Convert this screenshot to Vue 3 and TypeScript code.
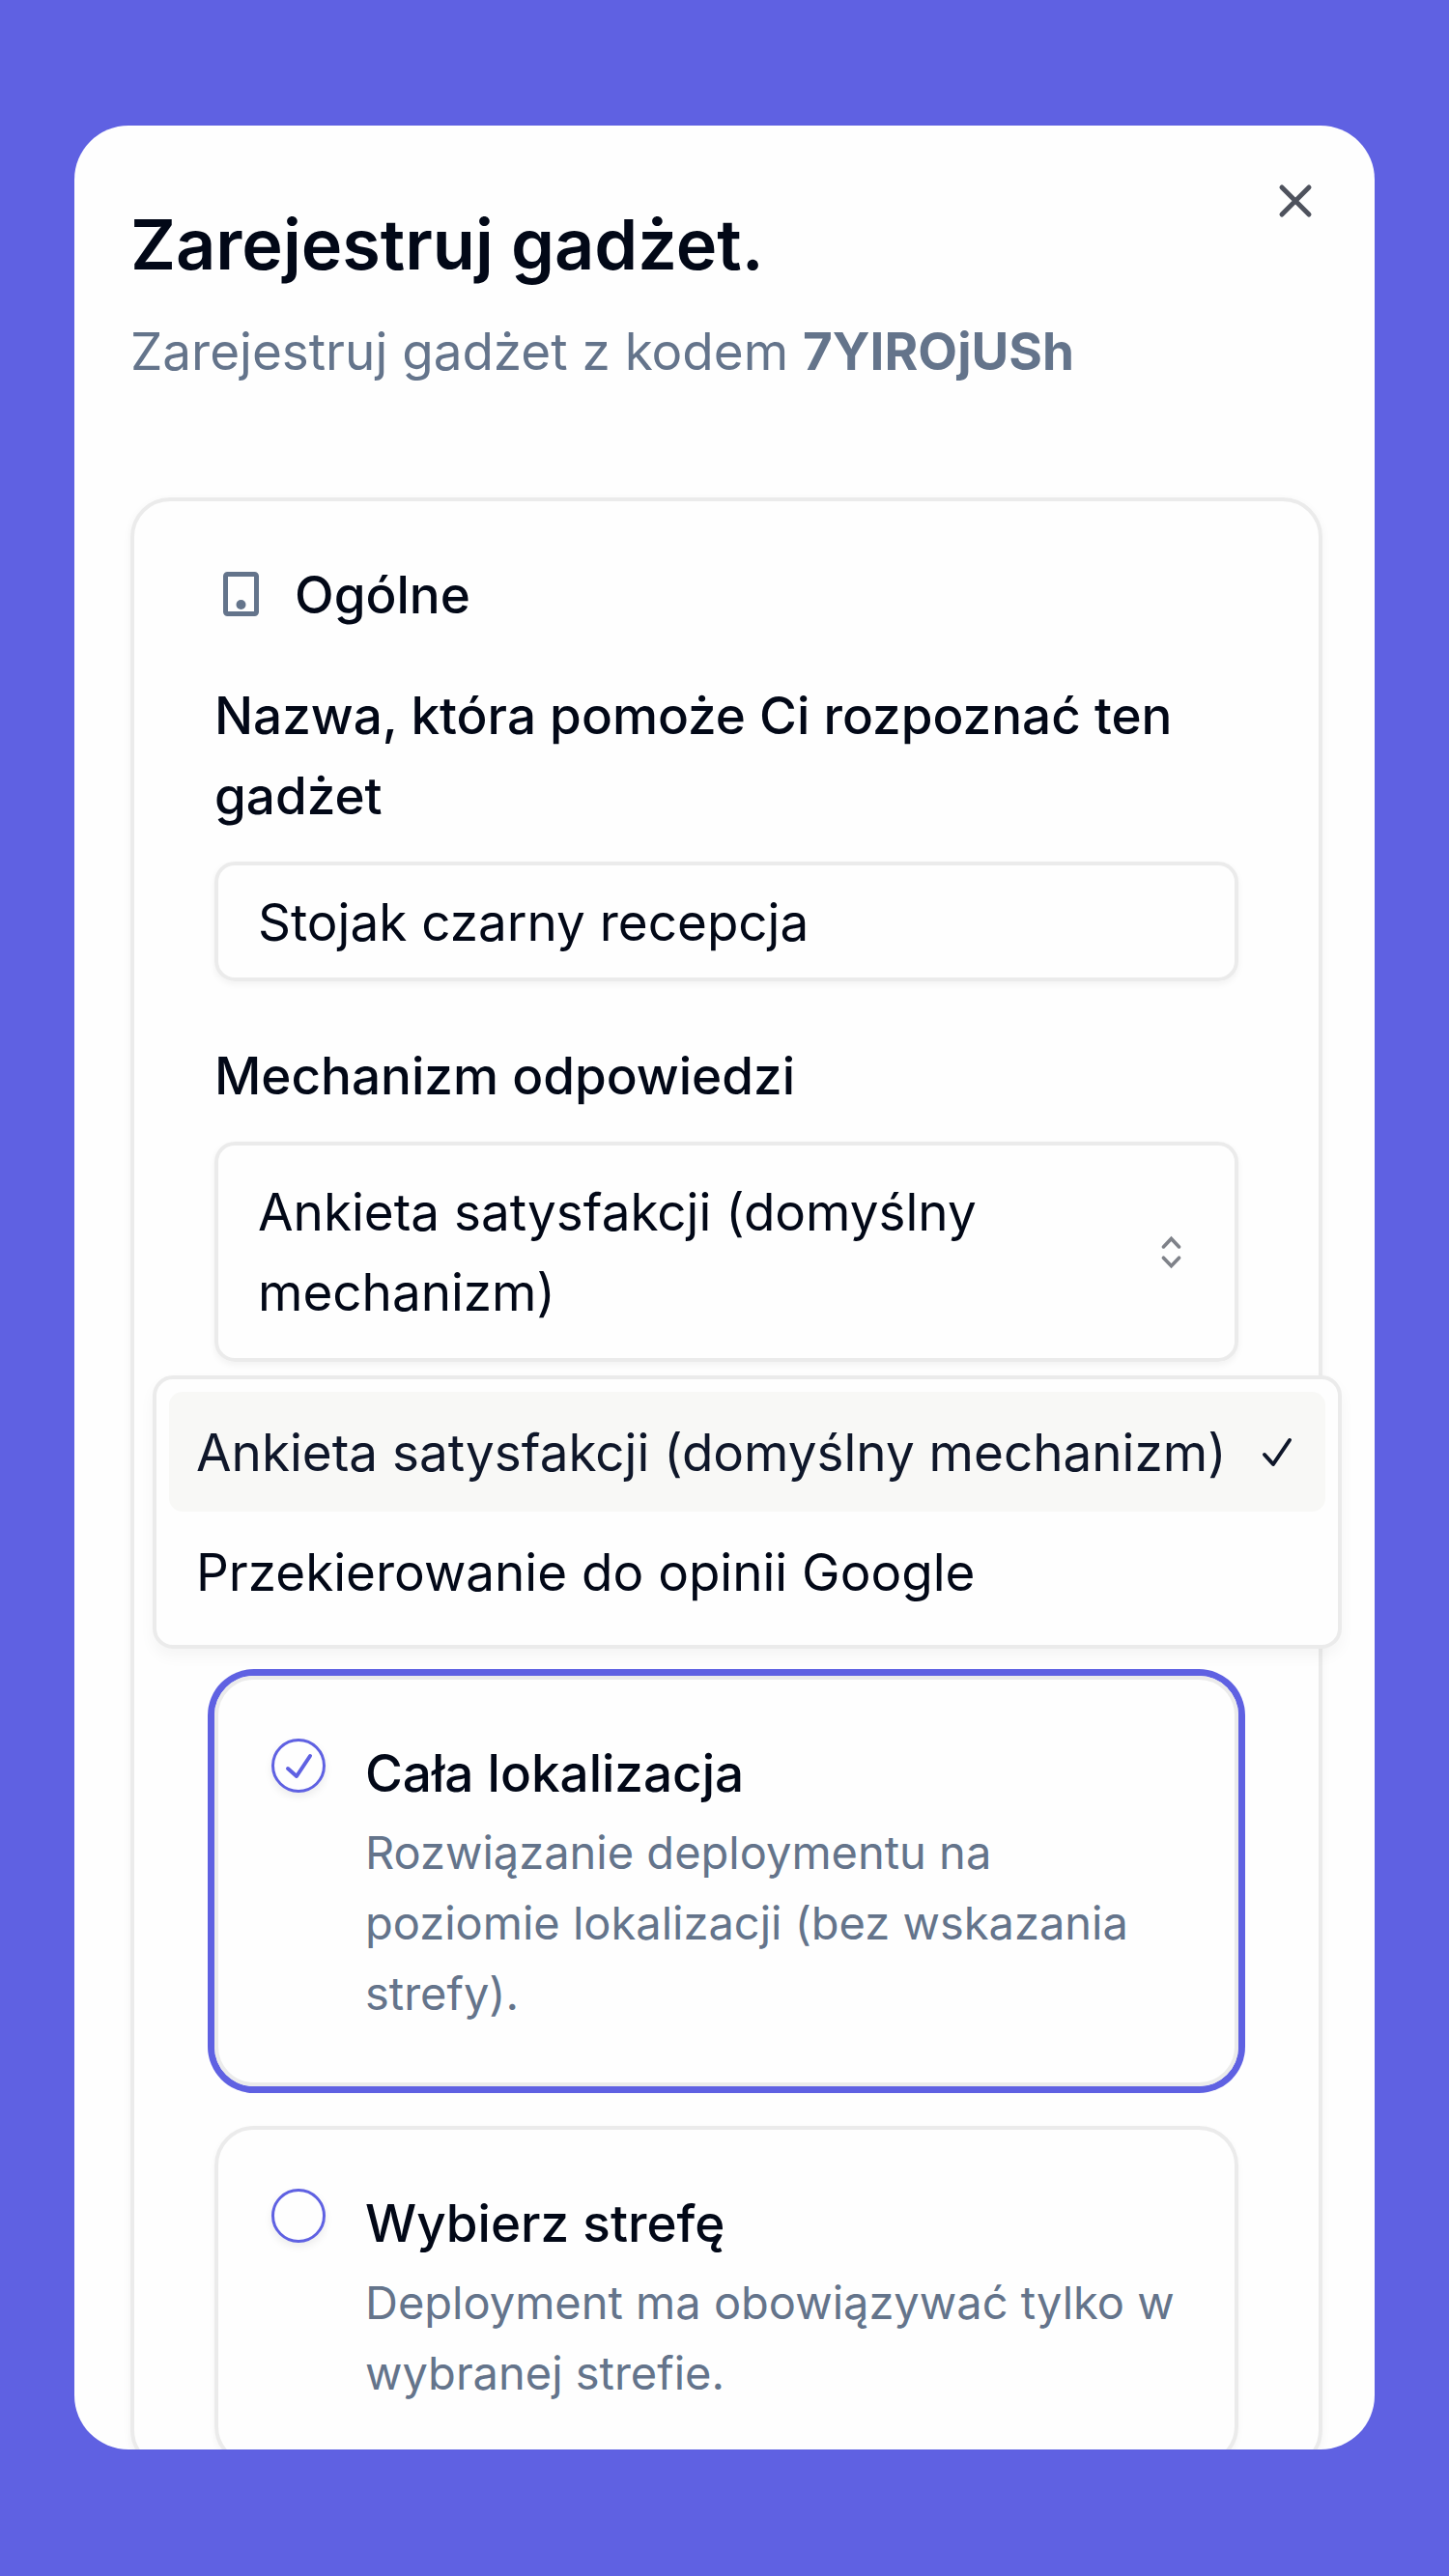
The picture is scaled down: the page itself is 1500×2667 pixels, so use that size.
<script setup lang="ts">
import { ref } from 'vue'

interface Choice {
  value: string
  label: string
}

interface Scope extends Choice {
  description: string
}

const code = '7YIROjUSh'
const gadgetName = ref('Stojak czarny recepcja')

const mechanisms: Choice[] = [
  { value: 'survey', label: 'Ankieta satysfakcji (domyślny mechanizm)' },
  { value: 'google', label: 'Przekierowanie do opinii Google' },
]
const mechanism = ref<Choice>(mechanisms[0])
const listOpen = ref(true)

const scopes: Scope[] = [
  {
    value: 'location',
    label: 'Cała lokalizacja',
    description: 'Rozwiązanie deploymentu na poziomie lokalizacji (bez wskazania strefy).',
  },
  {
    value: 'zone',
    label: 'Wybierz strefę',
    description: 'Deployment ma obowiązywać tylko w wybranej strefie.',
  },
]
const scope = ref('location')

function pick(option: Choice) {
  mechanism.value = option
  listOpen.value = false
}
</script>

<template>
  <main class="page">
    <section class="dialog" role="dialog" aria-labelledby="dialog-title">
      <button class="close" type="button" aria-label="Zamknij">
        <svg viewBox="0 0 52 52" fill="none" stroke="currentColor" stroke-width="5" stroke-linecap="round" aria-hidden="true">
          <path d="M12 12 40 40M40 12 12 40" />
        </svg>
      </button>

      <header class="head">
        <h1 id="dialog-title">Zarejestruj gadżet.</h1>
        <p>Zarejestruj gadżet z kodem <strong>{{ code }}</strong></p>
      </header>

      <form class="panel" @submit.prevent>
        <h2 class="panel-title">
          <svg viewBox="0 0 55 55" fill="none" aria-hidden="true">
            <rect x="11.500" y="5.500" width="32" height="41" rx="2" stroke="currentColor" stroke-width="5" />
            <circle cx="27.500" cy="37" r="5" fill="currentColor" />
          </svg>
          <span>Ogólne</span>
        </h2>

        <div class="field">
          <label for="gadget-name">Nazwa, która pomoże Ci rozpoznać ten gadżet</label>
          <input id="gadget-name" v-model="gadgetName" class="control text" type="text" />
        </div>

        <div class="field">
          <label for="mechanism">Mechanizm odpowiedzi</label>
          <div class="picker">
            <button
              id="mechanism"
              class="control trigger"
              type="button"
              role="combobox"
              aria-haspopup="listbox"
              aria-controls="mechanism-list"
              :aria-expanded="listOpen"
              @click="listOpen = !listOpen"
            >
              <span>{{ mechanism.label }}</span>
              <svg viewBox="0 0 15 15" fill="none" stroke="currentColor" stroke-linecap="round" aria-hidden="true">
                <path d="M5.3 5.7 7.5 3.4l2.2 2.3M5.3 8.800l2.2 2.3 2.2-2.3" />
              </svg>
            </button>

            <ul v-if="listOpen" id="mechanism-list" class="list" role="listbox">
              <li
                v-for="option in mechanisms"
                :key="option.value"
                role="option"
                :class="{ active: option.value === mechanism.value }"
                :aria-selected="option.value === mechanism.value"
                @click="pick(option)"
              >
                <span>{{ option.label }}</span>
                <svg
                  v-if="option.value === mechanism.value"
                  viewBox="0 0 32 32"
                  fill="none"
                  stroke="currentColor"
                  stroke-width="4"
                  stroke-linecap="round"
                  stroke-linejoin="round"
                  aria-hidden="true"
                >
                  <path d="M3 18 12 28 29 3" />
                </svg>
              </li>
            </ul>
          </div>
        </div>

        <fieldset class="scopes" aria-label="Zakres">
          <label v-for="item in scopes" :key="item.value" class="scope" :class="{ selected: item.value === scope }">
            <span class="radio">
              <input v-model="scope" type="radio" name="scope" :value="item.value" />
              <svg
                v-if="item.value === scope"
                viewBox="0 0 56 56"
                fill="none"
                stroke="currentColor"
                stroke-width="4"
                stroke-linecap="round"
                stroke-linejoin="round"
                aria-hidden="true"
              >
                <path d="M17 31 26 39 40 18" />
              </svg>
            </span>
            <span class="scope-text">
              <span class="scope-title">{{ item.label }}</span>
              <span class="scope-description">{{ item.description }}</span>
            </span>
          </label>
        </fieldset>
      </form>
    </section>
  </main>
</template>

<style>
body {
  margin: 0;
  background: #5f61e2;
}
</style>

<style scoped>
* {
  box-sizing: border-box;
}

.page {
  --ink: #020817;
  --muted: #64748b;
  --accent: #5f61e2;
  --line: #ebebeb;
  display: flex;
  height: 100vh;
  padding: 130px 77px 131px;
  background: var(--accent);
  color: var(--ink);
  font-family: Inter, 'Liberation Sans', sans-serif;
  font-size: 53px;
  line-height: 83px;
}

.dialog {
  position: relative;
  flex: 1;
  min-width: 0;
  padding: 82px 54px 0 58px;
  overflow: hidden;
  border-radius: 56px;
  background: #fefefe;
}

.close {
  position: absolute;
  top: 52px;
  right: 56px;
  display: flex;
  padding: 0;
  border: 0;
  background: none;
  color: #4e525d;
  cursor: pointer;
}

.close svg {
  width: 52px;
  height: 52px;
}

h1,
h2,
p {
  margin: 0;
}

.head h1 {
  font-size: 72px;
  font-weight: 600;
  line-height: 82px;
}

.head p {
  margin-top: 29px;
  color: var(--muted);
}

.head strong {
  font-weight: 700;
}

.panel {
  margin-top: 109px;
  padding: 56px 83px 0;
  border: 4px solid var(--line);
  border-radius: 41px;
  box-shadow: 0 3px 10px rgba(0, 0, 0, 0.05);
}

.panel-title {
  display: flex;
  align-items: center;
  gap: 28px;
  font-size: 53px;
  font-weight: 500;
}

.panel-title svg {
  width: 55px;
  height: 55px;
  color: var(--muted);
}

.field {
  margin-top: 57px;
}

.panel-title + .field {
  margin-top: 42px;
}

.field label {
  display: block;
  margin-bottom: 26px;
  font-weight: 500;
}

.control {
  display: flex;
  width: 100%;
  border: 4px solid var(--line);
  border-radius: 21px;
  background: transparent;
  box-shadow: 0 3px 7px rgba(0, 0, 0, 0.05);
  color: inherit;
  font: inherit;
  text-align: left;
}

.text {
  height: 124px;
  padding: 2px 41px 0;
}

.picker {
  position: relative;
}

.trigger {
  align-items: center;
  justify-content: space-between;
  padding: 28px 38px 26px 41px;
  cursor: pointer;
}

.trigger span {
  max-width: 800px;
}

.trigger svg {
  flex: none;
  width: 55px;
  height: 55px;
  opacity: 0.5;
}

.list {
  position: absolute;
  top: calc(100% + 14px);
  right: -107px;
  left: -64px;
  margin: 0;
  padding: 13px 13px 14px;
  border: 4px solid var(--line);
  border-radius: 21px;
  background: #fefefe;
  box-shadow: 0 8px 16px rgba(0, 0, 0, 0.04);
  list-style: none;
}

.list li {
  display: flex;
  align-items: center;
  justify-content: space-between;
  height: 124px;
  padding: 2px 34px 0 28px;
  border-radius: 14px;
  white-space: nowrap;
  cursor: pointer;
}

.list li.active {
  background: #f8f8f6;
  color: #0f172a;
}

.list svg {
  width: 32px;
  height: 32px;
}

.scopes {
  display: flex;
  flex-direction: column;
  gap: 41px;
  margin: 325px 0 0;
  padding: 0;
  border: 0;
}

.scope {
  display: flex;
  gap: 41px;
  padding: 56px 55px;
  border: 4px solid var(--line);
  border-radius: 41px;
  box-shadow: 0 3px 7px rgba(0, 0, 0, 0.04);
  cursor: pointer;
}

.scope.selected {
  box-shadow: 0 0 0 7px var(--accent);
}

.radio {
  position: relative;
  flex: none;
  width: 56px;
  height: 56px;
  margin-top: 5px;
  color: var(--accent);
}

.radio input {
  display: block;
  width: 100%;
  height: 100%;
  margin: 0;
  border: 3px solid var(--accent);
  border-radius: 50%;
  box-shadow: 0 4px 8px rgba(0, 0, 0, 0.08);
  appearance: none;
}

.radio svg {
  position: absolute;
  inset: 0;
}

.scope-text {
  display: flex;
  flex-direction: column;
  gap: 3px;
}

.scope-title {
  font-weight: 500;
}

.scope-description {
  color: var(--muted);
  font-size: 47px;
  line-height: 73px;
}
</style>
